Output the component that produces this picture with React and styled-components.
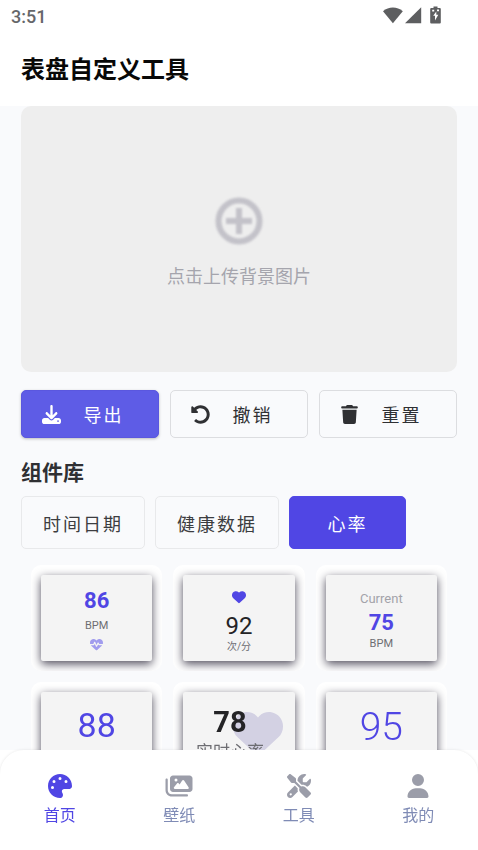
import { useRef, useState } from "react";
import styled, { createGlobalStyle } from "styled-components";
import { FaUndoAlt } from "react-icons/fa";
import {
  FaDownload,
  FaHeart,
  FaHeartPulse,
  FaImages,
  FaPalette,
  FaScrewdriverWrench,
  FaTrash,
  FaUser,
} from "react-icons/fa6";

const CATEGORIES = ["时间日期", "健康数据", "心率"];

const NAV_ITEMS = [
  { id: "home", label: "首页", Icon: FaPalette },
  { id: "wallpaper", label: "壁纸", Icon: FaImages },
  { id: "tools", label: "工具", Icon: FaScrewdriverWrench },
  { id: "mine", label: "我的", Icon: FaUser },
];

export default function App() {
  const fileRef = useRef(null);
  const [category, setCategory] = useState("心率");
  const [page, setPage] = useState("home");

  return (
    <Screen>
      <GlobalStyle />
      <Header>
        <StatusBar>
          <span>3:51</span>
          <StatusIcons />
        </StatusBar>
        <Title>表盘自定义工具</Title>
      </Header>

      <Content>
        <Upload type="button" onClick={() => fileRef.current.click()}>
          <PlusIcon />
          点击上传背景图片
        </Upload>
        <input ref={fileRef} type="file" accept="image/*" aria-label="点击上传背景图片" hidden />

        <Actions>
          <ActionButton type="button" $primary>
            <FaDownload />
            <ActionText>导出</ActionText>
          </ActionButton>
          <ActionButton type="button">
            <FaUndoAlt />
            <ActionText>撤销</ActionText>
          </ActionButton>
          <ActionButton type="button">
            <FaTrash />
            <ActionText>重置</ActionText>
          </ActionButton>
        </Actions>

        <SectionTitle>组件库</SectionTitle>
        <Tabs>
          {CATEGORIES.map(name => (
            <Tab key={name} type="button" $active={name === category} onClick={() => setCategory(name)}>
              {name}
            </Tab>
          ))}
        </Tabs>

        <Grid>
          <Card>
            <Face>
              <Value $size={22} $weight={700} $accent>86</Value>
              <Unit $size={11} $tall>BPM</Unit>
              <SmallPulse />
            </Face>
          </Card>
          <Card>
            <Face>
              <SmallHeart />
              <Value $size={24} $weight={400}>92</Value>
              <Unit $size={10}>次/分</Unit>
            </Face>
          </Card>
          <Card>
            <Face>
              <Caption>Current</Caption>
              <Value $size={22} $weight={700} $accent>75</Value>
              <Unit $size={11}>BPM</Unit>
            </Face>
          </Card>
          <Card>
            <Face $top>
              <Value $size={34} $weight={400} $accent>88</Value>
            </Face>
          </Card>
          <Card>
            <Face $top $shifted>
              <BackHeart />
              <Value $size={29} $weight={700}>78</Value>
              <Unit $size={17}>实时心率</Unit>
            </Face>
          </Card>
          <Card>
            <Face $top>
              <Value $size={39} $weight={300} $accent>95</Value>
            </Face>
          </Card>
        </Grid>
      </Content>

      <Nav>
        {NAV_ITEMS.map(({ id, label, Icon }) => (
          <NavLink key={id} href={`#${id}`} $active={id === page} onClick={() => setPage(id)}>
            <Icon />
            <span>{label}</span>
          </NavLink>
        ))}
      </Nav>
    </Screen>
  );
}

function StatusIcons() {
  return (
    <svg width="59" height="20" viewBox="0 0 59 20" fill="#5d5e60" aria-hidden="true">
      <path d="M0 5.2C5.6 0.3 14.2 0.3 19.8 5.2L9.9 17.2Z" />
      <path d="M38.2 1.2V17.2H22Z" />
      <path d="M50.5 0.4h4v1.6h2.3a1 1 0 0 1 1 1v13.4a1 1 0 0 1-1 1h-8.6a1 1 0 0 1-1-1V3a1 1 0 0 1 1-1h2.3Z" />
      <path d="M49.2 3.8h2v1.6h-2zM54 3.6h2v1.6h-2zM53.3 5.4L50.2 9.8H52V14.6L55.3 8.8H53.3Z" fill="#fff" />
    </svg>
  );
}

function PlusIcon() {
  return (
    <SoftSvg width="50" height="50" viewBox="0 0 50 50" fill="none" stroke="#c3c2c9" aria-hidden="true">
      <circle cx="25" cy="25" r="20.5" strokeWidth="6" />
      <path d="M25 12v26M12 25h26" strokeWidth="6" />
    </SoftSvg>
  );
}

// --- STYLED COMPONENTS ---

const GlobalStyle = createGlobalStyle`
  * { box-sizing: border-box; }
  body {
    margin: 0;
    background: #fff;
    font-family: Roboto, "Noto Sans CJK SC", sans-serif;
  }
  button {
    font-family: inherit;
    cursor: pointer;
  }
`;

const Screen = styled.div`
  display: flex;
  flex-direction: column;
  height: 100vh;
  background: #fff;
`;

const Header = styled.header`
  flex: none;
`;

const StatusBar = styled.div`
  display: flex;
  align-items: center;
  justify-content: space-between;
  height: 32px;
  padding: 0 36px 0 11px;
  color: #66676a;
  font-size: 18px;
  font-weight: 500;
`;

const Title = styled.h1`
  margin: 0;
  padding: 2px 21px 0;
  color: #080808;
  font-size: 24px;
  font-weight: 700;
  line-height: 72px;
`;

const Content = styled.main`
  flex: 1;
  min-height: 0;
  padding: 0 21px;
  overflow-y: auto;
  scrollbar-width: none;
  background: #f9fafc;
`;

const Upload = styled.button`
  display: flex;
  flex-direction: column;
  align-items: center;
  justify-content: center;
  gap: 17px;
  width: 100%;
  height: 266px;
  padding: 9px 0 0;
  border: none;
  border-radius: 10px;
  background: #eee;
  color: #a5a5ad;
  font-size: 18px;
  line-height: 28px;
`;

const SoftSvg = styled.svg`
  filter: blur(1px);
`;

const Actions = styled.div`
  display: grid;
  grid-template-columns: repeat(3, 1fr);
  gap: 11px;
  margin-top: 18px;
`;

const ActionButton = styled.button`
  display: flex;
  align-items: center;
  height: 48px;
  padding: 0 20px;
  border: ${p => (p.$primary ? "1px solid #5a57df" : "1px solid #dcdde0")};
  border-radius: 5px;
  background: ${p => (p.$primary ? "#5e5ce6" : "transparent")};
  color: ${p => (p.$primary ? "#fff" : "#2f3033")};
  box-shadow: ${p => (p.$primary ? "0 1px 3px rgba(0, 0, 0, 0.25)" : "none")};
  svg {
    flex: none;
    width: 19px;
    height: 19px;
  }
`;

const ActionText = styled.span`
  flex: 1;
  font-size: 18px;
  letter-spacing: 2px;
  text-align: center;
  padding-left: 8px;
`;

const SectionTitle = styled.h2`
  margin: 20px 0 8px;
  color: #2f3033;
  font-size: 21px;
  font-weight: 700;
  line-height: 30px;
`;

const Tabs = styled.div`
  display: flex;
  gap: 10px;
`;

const Tab = styled.button`
  min-width: 117px;
  height: 53px;
  padding: 0 21px;
  border: 1px solid ${p => (p.$active ? "#5148e5" : "#e8e9eb")};
  border-radius: 5px;
  background: ${p => (p.$active ? "#5046e4" : "transparent")};
  color: ${p => (p.$active ? "#fff" : "#3c3d40")};
  font-size: 18px;
  letter-spacing: 2px;
`;

const Grid = styled.div`
  display: grid;
  grid-template-columns: repeat(3, 1fr);
  gap: 11px;
  padding: 16px 10px;
`;

const Card = styled.div`
  padding: 10px;
  border-radius: 10px;
  background: #fff;
  overflow: hidden;
`;

const Face = styled.div`
  position: relative;
  display: flex;
  flex-direction: column;
  align-items: center;
  justify-content: ${p => (p.$top ? "flex-start" : "center")};
  gap: ${p => (p.$shifted ? "3px" : "0")};
  height: 86px;
  padding: ${p => (p.$top ? "14px" : "3px")} ${p => (p.$shifted ? "18px" : "0")} 0 0;
  border-radius: 2px;
  background: #f4f4f4;
  box-shadow: 0 3px 10px rgba(20, 16, 36, 0.75);
`;

const Value = styled.strong`
  position: relative;
  color: ${p => (p.$accent ? "#5046e4" : "#242426")};
  font-size: ${p => p.$size}px;
  font-weight: ${p => p.$weight};
  line-height: ${p => p.$size + 4}px;
`;

const Unit = styled.span`
  position: relative;
  color: #6d6d72;
  font-size: ${p => p.$size}px;
  line-height: ${p => (p.$tall ? 24 : p.$size + 4)}px;
  white-space: nowrap;
`;

const Caption = styled.span`
  color: #a3a3aa;
  font-size: 13px;
  line-height: 22px;
`;

const SmallPulse = styled(FaHeartPulse)`
  width: 13px;
  height: 13px;
  color: #a19cee;
`;

const SmallHeart = styled(FaHeart)`
  width: 14px;
  height: 14px;
  margin: 4px 0 8px;
  color: #5046e4;
`;

// faded heart lying behind the number
const BackHeart = styled(FaHeart)`
  position: absolute;
  top: 16px;
  right: 12px;
  width: 50px;
  height: 50px;
  color: #d3d1e3;
`;

const Nav = styled.nav`
  flex: none;
  display: grid;
  grid-template-columns: repeat(4, 1fr);
  height: 100px;
  padding-top: 24px;
  border-radius: 24px 24px 0 0;
  background: #fff;
  box-shadow: 0 0 3px rgba(0, 0, 0, 0.1);
`;

const NavLink = styled.a`
  display: flex;
  flex-direction: column;
  align-items: center;
  gap: 6px;
  color: ${p => (p.$active ? "#5046e4" : "#7f8bb5")};
  font-size: 16px;
  line-height: 24px;
  text-decoration: none;
  svg {
    width: 28px;
    height: 24px;
    color: ${p => (p.$active ? "#5046e4" : "#9b9da9")};
  }
`;
